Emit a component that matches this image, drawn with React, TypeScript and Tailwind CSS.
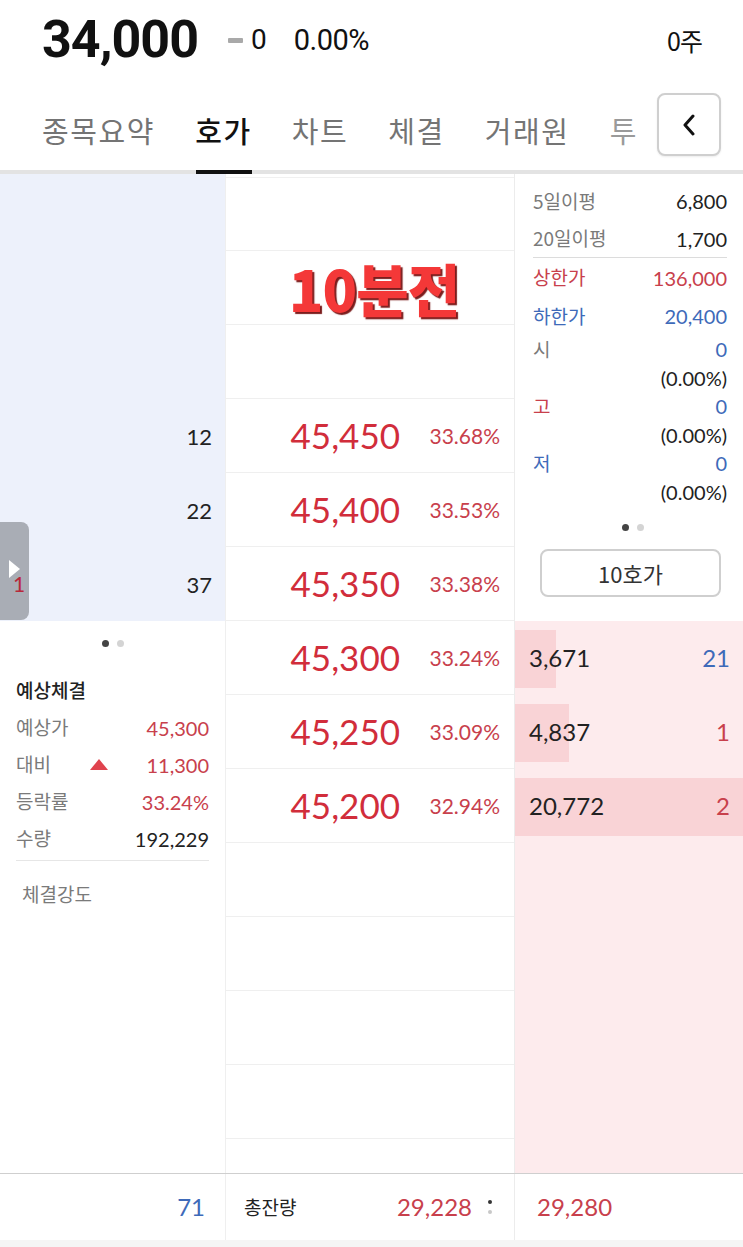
import React from "react";

const KR = "font-['Noto_Sans_CJK_KR',sans-serif]";
const NUM = "font-['Lato','Noto_Sans_CJK_KR',sans-serif]";

const prices = [
  { p: "45,450", r: "33.68%" },
  { p: "45,400", r: "33.53%" },
  { p: "45,350", r: "33.38%" },
  { p: "45,300", r: "33.24%" },
  { p: "45,250", r: "33.09%" },
  { p: "45,200", r: "32.94%" },
];

const bids = [
  { v: "3,671", n: "21", blue: true, w: 41 },
  { v: "4,837", n: "1", blue: false, w: 54 },
  { v: "20,772", n: "2", blue: false, w: 228 },
];

function MiddleRow({ i }: { i: number }) {
  const h = i === 0 ? "h-[73px]" : "h-[74px]";
  if (i === 1) {
    return (
      <div className={`${h} border-b border-[#efefef] flex items-center justify-center pl-[8px]`}>
        <span
          className={`${KR} text-[57px] font-black text-[#f43838] leading-none tracking-[-1px] [text-shadow:2px_2px_1px_#7b1d1d]`}
        >
          10분전
        </span>
      </div>
    );
  }
  if (i >= 3 && i <= 8) {
    const d = prices[i - 3];
    return (
      <div className={`${h} border-b border-[#efefef] flex items-center`}>
        <span className={`${NUM} w-[174px] text-right text-[35px] text-[#d12d3b] leading-none`}>{d.p}</span>
        <span className={`${NUM} flex-1 text-right pr-[14px] text-[21px] text-[#c8404c] leading-none`}>{d.r}</span>
      </div>
    );
  }
  return <div className={`${h} border-b border-[#efefef]`} />;
}

export default function App() {
  return (
    <div className="w-[743px] h-[1247px] bg-white relative overflow-hidden flex flex-col">
      {/* Header */}
      <div className="h-[80px] flex items-center pl-[42px] pr-[41px] shrink-0">
        <span className="font-['Roboto',sans-serif] font-bold text-[52px] tracking-[-1px] text-[#111] leading-none">
          34,000
        </span>
        <span className="ml-[30px] w-[15px] h-[5px] bg-[#a9a9a9] rounded-[1px]" />
        <span className="ml-[8px] font-['Roboto',sans-serif] text-[28px] text-[#111] leading-none">0</span>
        <span className="ml-[27px] font-['Roboto',sans-serif] text-[29px] text-[#111] leading-none tracking-[-0.5px]">
          0.00%
        </span>
        <span className={`ml-auto ${KR} text-[25px] text-[#111] leading-none tracking-[-1px]`}>0주</span>
      </div>

      {/* Tabs */}
      <div className="h-[90px] flex items-start pl-[42px] shrink-0">
        <div className={`flex gap-[40px] mt-[30px] ${KR} text-[29px] tracking-[1.6px] leading-[40px] text-[#747474]`}>
          <span>종목요약</span>
          <span className="text-[#111] font-medium">호가</span>
          <span>차트</span>
          <span>체결</span>
          <span>거래원</span>
          <span className="text-[#9a9a9a]">투</span>
        </div>
        <div className="ml-auto mr-[22px] mt-[13px] w-[64px] h-[63px] rounded-[8px] border-2 border-[#cfcfcf] bg-white flex items-center justify-center shadow-[0_1px_2px_rgba(0,0,0,0.08)]">
          <svg width="14" height="22" viewBox="0 0 14 22" fill="none">
            <path d="M11 2 L3 11 L11 20" stroke="#111" strokeWidth="3" strokeLinecap="round" strokeLinejoin="round" />
          </svg>
        </div>
      </div>

      {/* Tab underline */}
      <div className="h-[4px] bg-[#e3e3e3] shrink-0 flex">
        <div className="ml-[196px] w-[56px] h-full bg-[#111]" />
      </div>

      {/* Body */}
      <div className="h-[999px] flex shrink-0">
        {/* Left column */}
        <div className="w-[226px] flex flex-col border-r border-[#efefef]">
          <div className="h-[447px] bg-[#edf1fb] flex flex-col justify-end">
            {["12", "22", "37"].map((n) => (
              <div key={n} className={`h-[74px] flex items-center justify-end pr-[13px] ${NUM} text-[22px] text-[#222]`}>
                {n}
              </div>
            ))}
          </div>
          <div className="flex-1 flex flex-col px-[16px]">
            <div className="h-[44px] flex items-center justify-center gap-[8px]">
              <span className="w-[7px] h-[7px] rounded-full bg-[#444]" />
              <span className="w-[7px] h-[7px] rounded-full bg-[#d4d4d4]" />
            </div>
            <div className={`mt-[6px] h-[38px] flex items-center ${KR} text-[19px] font-medium text-[#222]`}>예상체결</div>
            {[
              { l: "예상가", v: "45,300", c: "text-[#c8404c]" },
              { l: "대비", v: "11,300", c: "text-[#c8404c]", tri: true },
              { l: "등락률", v: "33.24%", c: "text-[#c8404c]" },
              { l: "수량", v: "192,229", c: "text-[#222]" },
            ].map((r) => (
              <div key={r.l} className="h-[37px] flex items-center">
                <span className={`${KR} text-[19px] text-[#7a7a7a] w-[73px]`}>{r.l}</span>
                {r.tri ? (
                  <svg width="18" height="11" viewBox="0 0 18 11" className="ml-[1px]">
                    <path d="M9 0 L18 11 L0 11 Z" fill="#e0434e" />
                  </svg>
                ) : null}
                <span className={`ml-auto ${NUM} text-[20px] ${r.c}`}>{r.v}</span>
              </div>
            ))}
            <div className="mt-[3px] h-[1px] bg-[#e6e6e6]" />
            <div className={`h-[66px] flex items-center pl-[6px] ${KR} text-[19px] text-[#7a7a7a]`}>체결강도</div>
          </div>
        </div>

        {/* Middle column */}
        <div className="w-[289px] flex flex-col border-r border-[#ececec] pt-[3px]">
          <div className="border-t border-[#f0f0f0]" />
          {Array.from({ length: 13 }).map((_, i) => (
            <MiddleRow key={i} i={i} />
          ))}
          <div className="flex-1" />
        </div>

        {/* Right column */}
        <div className="flex-1 flex flex-col">
          <div className="h-[447px] flex flex-col pl-[18px] pr-[16px] pt-[8px]">
            <div className="h-[38px] flex items-center justify-between">
              <span className={`${KR} text-[19px] text-[#7a7a7a]`}>5일이평</span>
              <span className={`${NUM} text-[20px] text-[#222]`}>6,800</span>
            </div>
            <div className="h-[38px] flex items-center justify-between border-b border-[#dcdcdc]">
              <span className={`${KR} text-[19px] text-[#7a7a7a]`}>20일이평</span>
              <span className={`${NUM} text-[20px] text-[#222]`}>1,700</span>
            </div>
            <div className="h-[39px] flex items-center justify-between">
              <span className={`${KR} text-[19px] text-[#c8404c]`}>상한가</span>
              <span className={`${NUM} text-[20px] text-[#c8404c]`}>136,000</span>
            </div>
            <div className="h-[38px] flex items-center justify-between">
              <span className={`${KR} text-[19px] text-[#3e6ab9]`}>하한가</span>
              <span className={`${NUM} text-[20px] text-[#3e6ab9]`}>20,400</span>
            </div>
            {[
              { l: "시", c: "text-[#7a7a7a]" },
              { l: "고", c: "text-[#c8404c]" },
              { l: "저", c: "text-[#3e6ab9]" },
            ].map((r) => (
              <React.Fragment key={r.l}>
                <div className="h-[28px] flex items-center justify-between">
                  <span className={`${KR} text-[19px] ${r.c}`}>{r.l}</span>
                  <span className={`${NUM} text-[20px] text-[#3e6ab9]`}>0</span>
                </div>
                <div className="h-[29px] flex items-center justify-end">
                  <span className={`${NUM} text-[20px] text-[#222]`}>(0.00%)</span>
                </div>
              </React.Fragment>
            ))}
            <div className="h-[42px] flex items-center justify-center gap-[8px] pl-[6px]">
              <span className="w-[7px] h-[7px] rounded-full bg-[#444]" />
              <span className="w-[7px] h-[7px] rounded-full bg-[#d4d4d4]" />
            </div>
            <div
              className={`mt-[1px] ml-[7px] mr-[6px] h-[48px] rounded-[8px] border-2 border-[#cfcfcf] flex items-center justify-center ${KR} text-[22px] text-[#333]`}
            >
              10호가
            </div>
          </div>
          <div className="flex-1 bg-[#fdebed] flex flex-col">
            {bids.map((b) => (
              <div key={b.v} className="h-[74px] relative flex items-center">
                <div className="absolute left-0 top-[9px] h-[58px] bg-[#f9d3d6]" style={{ width: b.w }} />
                <span className={`relative pl-[14px] ${NUM} text-[24px] text-[#222]`}>{b.v}</span>
                <span
                  className={`relative ml-auto pr-[13px] ${NUM} text-[24px] ${b.blue ? "text-[#3e6ab9]" : "text-[#c8404c]"}`}
                >
                  {b.n}
                </span>
              </div>
            ))}
          </div>
        </div>
      </div>

      {/* Bottom bar */}
      <div className="h-[1px] bg-[#cfcfcf] shrink-0" />
      <div className="h-[66px] flex shrink-0">
        <div className={`w-[226px] border-r border-[#efefef] flex items-center justify-end pr-[20px] ${NUM} text-[24px] text-[#3e6ab9]`}>
          71
        </div>
        <div className="w-[289px] border-r border-[#ececec] flex items-center pl-[18px]">
          <span className={`${KR} text-[19px] text-[#222]`}>총잔량</span>
          <span className={`ml-auto ${NUM} text-[24px] text-[#c8404c]`}>29,228</span>
          <span className="ml-[16px] mr-[22px] flex flex-col gap-[6px] items-center">
            <span className="w-[4px] h-[4px] rounded-full bg-[#333]" />
            <span className="w-[4px] h-[4px] rounded-full bg-[#c8c8c8]" />
          </span>
        </div>
        <div className={`flex-1 flex items-center pl-[22px] ${NUM} text-[24px] text-[#c8404c]`}>29,280</div>
      </div>
      <div className="flex-1 bg-[#f5f5f5]" />

      {/* Side drawer tab */}
      <div className="absolute left-0 top-[522px] w-[29px] h-[98px] rounded-r-[8px] bg-[#a9adb5]">
        <svg width="12" height="20" viewBox="0 0 12 20" className="absolute left-[9px] top-[38px]">
          <path d="M0 0 L11 9 L0 18 Z" fill="#ffffff" />
        </svg>
        <span className={`absolute left-[13px] top-[50px] ${NUM} text-[21px] text-[#b8283a] leading-[24px]`}>1</span>
      </div>
    </div>
  );
}
